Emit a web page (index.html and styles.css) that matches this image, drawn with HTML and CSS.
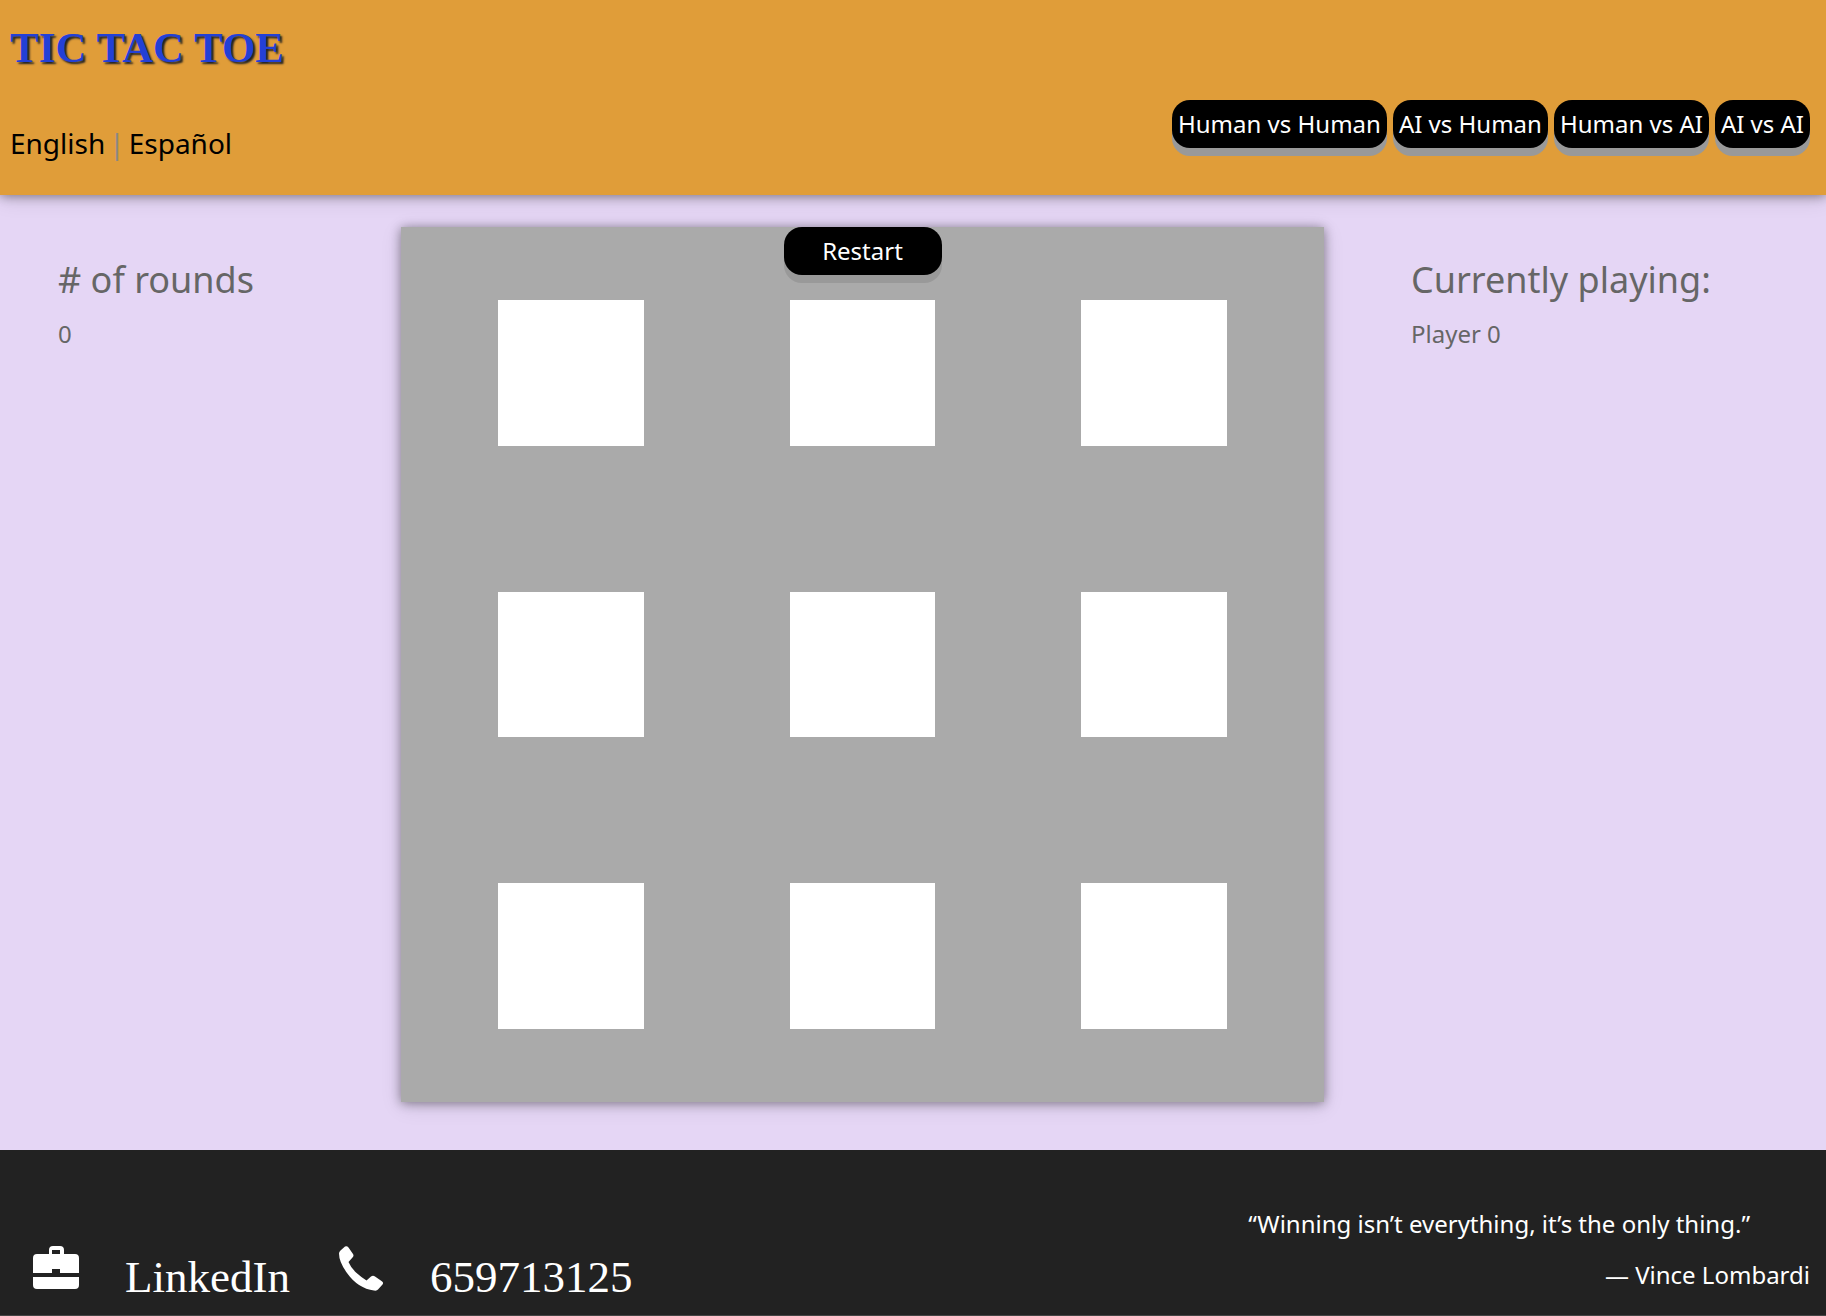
FILE: index.html
```html
<!DOCTYPE html>
<html lang="en">
<head>
<meta charset="utf-8">
<title>Tic Tac Toe</title>
<link rel="stylesheet" href="styles.css">
</head>
<body>
<header class="header">
  <div class="brand">
    <h1 class="title">TIC TAC TOE</h1>
    <nav class="languages"><a href="#en">English</a><span class="divider">|</span><a href="#es">Español</a></nav>
  </div>
  <div class="modes">
    <button class="pill" type="button">Human vs Human</button>
    <button class="pill" type="button">AI vs Human</button>
    <button class="pill" type="button">Human vs AI</button>
    <button class="pill" type="button">AI vs AI</button>
  </div>
</header>
<main class="game">
  <section class="panel">
    <h2 class="panel-title"># of rounds</h2>
    <p class="panel-value">0</p>
  </section>
  <section class="board">
    <button class="pill restart" type="button">Restart</button>
    <div class="cells">
      <div class="slot"><button class="cell" type="button" aria-label="Cell 1"></button></div>
      <div class="slot"><button class="cell" type="button" aria-label="Cell 2"></button></div>
      <div class="slot"><button class="cell" type="button" aria-label="Cell 3"></button></div>
      <div class="slot"><button class="cell" type="button" aria-label="Cell 4"></button></div>
      <div class="slot"><button class="cell" type="button" aria-label="Cell 5"></button></div>
      <div class="slot"><button class="cell" type="button" aria-label="Cell 6"></button></div>
      <div class="slot"><button class="cell" type="button" aria-label="Cell 7"></button></div>
      <div class="slot"><button class="cell" type="button" aria-label="Cell 8"></button></div>
      <div class="slot"><button class="cell" type="button" aria-label="Cell 9"></button></div>
    </div>
  </section>
  <section class="panel panel-right">
    <h2 class="panel-title">Currently playing:</h2>
    <p class="panel-value">Player 0</p>
  </section>
</main>
<footer class="footer">
  <div class="contacts">
    <a class="contact" href="#linkedin">
      <svg class="icon" viewBox="0 0 46 46" aria-hidden="true"><path fill="currentColor" fill-rule="evenodd" d="M16 9V5a4 4 0 0 1 4-4h7a4 4 0 0 1 4 4v4h11a4 4 0 0 1 4 4v15H27v-4h-8v4H0V13a4 4 0 0 1 4-4zM19 9h8V5h-8zM0 32h46v8a4 4 0 0 1-4 4H4a4 4 0 0 1-4-4z"/></svg>
      <span>LinkedIn</span>
    </a>
    <a class="contact" href="tel:659713125">
      <svg class="icon" viewBox="0 0 46 46" aria-hidden="true"><path fill="currentColor" d="M7 1.500Q9 .5 10.500 2.500L15 9Q16.200 11 14.500 12.500L10.500 17Q13 23 18 27.500Q23 32 28.500 35.500L33 31.500Q35 30 37 31.500L43.500 36Q46 37.500 44.500 39.500L40 44.500Q39 46 36 45.500Q20 43.500 9 28Q1 17 1 8.500Q1 7 2.500 5.500Z"/></svg>
      <span>659713125</span>
    </a>
  </div>
  <figure class="quote">
    <blockquote class="quote-text">“Winning isn’t everything, it’s the only thing.”</blockquote>
    <figcaption>— Vince Lombardi</figcaption>
  </figure>
</footer>
</body>
</html>
```
FILE: styles.css
```css
* { box-sizing: border-box; }

body {
  margin: 0;
  min-height: 100vh;
  display: flex;
  flex-direction: column;
  background: #e5d6f5;
  font-family: "Noto Sans", "Open Sans", sans-serif;
  font-size: 24px;
  line-height: 32px;
}

h1, h2, p, figure, blockquote { margin: 0; }
a { color: inherit; text-decoration: none; }

.header {
  display: flex;
  justify-content: space-between;
  align-items: flex-end;
  padding: 24px 16px 36px 10px;
  background: #e09d39;
  box-shadow: 0 1px 10px rgba(0, 0, 0, .4), 0 4px 20px rgba(0, 0, 0, .12);
}

.brand {
  display: flex;
  flex-direction: column;
  gap: 55px;
}

.title {
  color: #2340d6;
  font: bold 43px/48px "Liberation Serif", serif;
  text-shadow: 2px 2px 2px #222;
}

.languages {
  display: flex;
  gap: 4px;
  font-size: 28px;
}

.divider { color: #888; }

.modes {
  display: flex;
  gap: 6px;
  padding-bottom: 11px;
}

.pill {
  height: 48px;
  padding: 0 6px;
  border: 0;
  border-radius: 18px;
  background: #000;
  color: #fff;
  font: inherit;
  box-shadow: 0 8px #999;
}

.game {
  flex: 1;
  display: grid;
  grid-template-columns: 401fr 923fr 502fr;
  align-items: start;
  padding: 32px 0 46px;
}

.panel {
  padding: 28px 0 0 58px;
  color: #666;
}

.panel-right { padding-left: 87px; }

.panel-title {
  font-size: 36px;
  font-weight: 400;
  line-height: 50px;
}

.panel-value {
  padding-top: 13px;
}

.board {
  position: relative;
  padding: 0 24px;
  background: #aaa;
  box-shadow: 0 1px 10px rgba(0, 0, 0, .4), 0 4px 20px rgba(0, 0, 0, .12);
}

.restart {
  position: absolute;
  top: 0;
  left: 50%;
  width: 158px;
  transform: translateX(-50%);
}

.cells {
  display: grid;
  grid-template-columns: repeat(3, 1fr);
}

.slot {
  display: flex;
  aspect-ratio: 1;
  padding: 25%;
}

.cell {
  flex: 1;
  padding: 0;
  border: 0;
  background: #fff;
}

.footer {
  display: flex;
  justify-content: space-between;
  align-items: flex-end;
  padding: 58px 16px 6px 33px;
  border-bottom: 1px solid #444;
  background: #222;
  color: #fff;
}

.contacts {
  display: flex;
  gap: 48px;
  font: 45px/64px "Liberation Serif", serif;
}

.contact {
  display: flex;
  gap: 46px;
}

.icon {
  width: 46px;
  height: 46px;
}

.quote {
  display: flex;
  flex-direction: column;
  gap: 19px;
  padding-bottom: 18px;
  text-align: right;
}

.quote-text { padding-right: 60px; }
```
